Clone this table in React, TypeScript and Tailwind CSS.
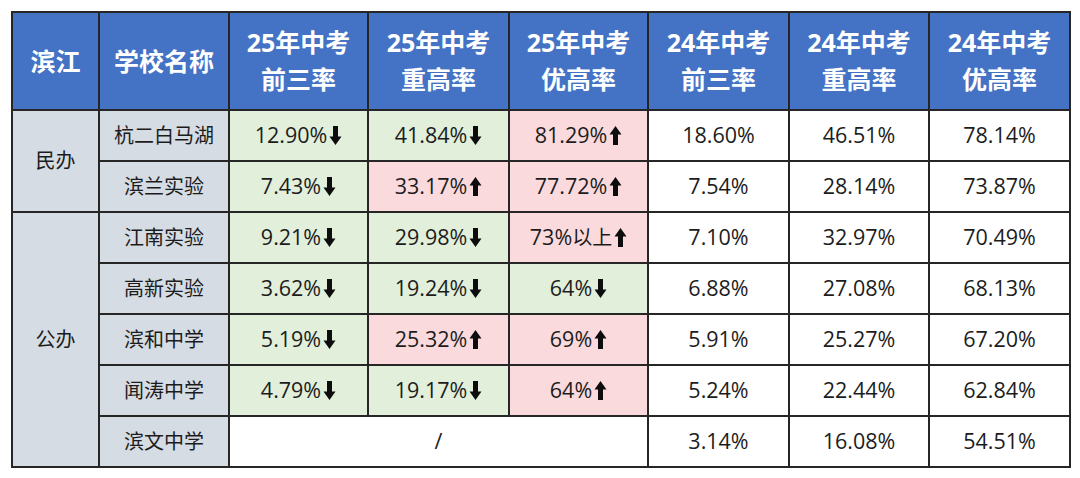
import React from "react";

type Cell = { v: string; t?: "up" | "down" };

const headers = [
  ["滨江"],
  ["学校名称"],
  ["25年中考", "前三率"],
  ["25年中考", "重高率"],
  ["25年中考", "优高率"],
  ["24年中考", "前三率"],
  ["24年中考", "重高率"],
  ["24年中考", "优高率"],
];

const rows: { group?: string; span?: number; name: string; cur: Cell[] | null; prev: string[] }[] = [
  {
    group: "民办",
    span: 2,
    name: "杭二白马湖",
    cur: [
      { v: "12.90%", t: "down" },
      { v: "41.84%", t: "down" },
      { v: "81.29%", t: "up" },
    ],
    prev: ["18.60%", "46.51%", "78.14%"],
  },
  {
    name: "滨兰实验",
    cur: [
      { v: "7.43%", t: "down" },
      { v: "33.17%", t: "up" },
      { v: "77.72%", t: "up" },
    ],
    prev: ["7.54%", "28.14%", "73.87%"],
  },
  {
    group: "公办",
    span: 5,
    name: "江南实验",
    cur: [
      { v: "9.21%", t: "down" },
      { v: "29.98%", t: "down" },
      { v: "73%以上", t: "up" },
    ],
    prev: ["7.10%", "32.97%", "70.49%"],
  },
  {
    name: "高新实验",
    cur: [
      { v: "3.62%", t: "down" },
      { v: "19.24%", t: "down" },
      { v: "64%", t: "down" },
    ],
    prev: ["6.88%", "27.08%", "68.13%"],
  },
  {
    name: "滨和中学",
    cur: [
      { v: "5.19%", t: "down" },
      { v: "25.32%", t: "up" },
      { v: "69%", t: "up" },
    ],
    prev: ["5.91%", "25.27%", "67.20%"],
  },
  {
    name: "闻涛中学",
    cur: [
      { v: "4.79%", t: "down" },
      { v: "19.17%", t: "down" },
      { v: "64%", t: "up" },
    ],
    prev: ["5.24%", "22.44%", "62.84%"],
  },
  {
    name: "滨文中学",
    cur: null,
    prev: ["3.14%", "16.08%", "54.51%"],
  },
];

function Arrow({ dir }: { dir: "up" | "down" }) {
  return (
    <svg
      width="13"
      height="19"
      viewBox="0 0 13 19"
      className={"ml-[2px] " + (dir === "up" ? "rotate-180" : "")}
    >
      <path d="M4 0 H9 V10.5 H12.5 L6.5 19 L0.5 10.5 H4 Z" fill="#0d0d0d" />
    </svg>
  );
}

// digits a bit larger than the CJK text, like the original's font
function Val({ v }: { v: string }) {
  const parts = v.split(/([\u4e00-\u9fff]+)/).filter(Boolean);
  return (
    <>
      {parts.map((p, i) =>
        /[\u4e00-\u9fff]/.test(p) ? (
          <span key={i} className="text-[20px]">
            {p}
          </span>
        ) : (
          <span key={i} className="text-[21.5px]">
            {p}
          </span>
        )
      )}
    </>
  );
}

const cellBase = "border-2 border-[#262626] text-center align-middle";

export default function App() {
  return (
    <div className="w-[1080px] h-[478px] bg-white pt-[11px] pl-[11px] font-['Open_Sans','Noto_Sans_CJK_SC',sans-serif] text-[#1c1c1c]">
      <table className="table-fixed border-collapse w-[1058px]">
        <colgroup>
          <col className="w-[87px]" />
          <col className="w-[130px]" />
          <col className="w-[139px]" />
          <col className="w-[141px]" />
          <col className="w-[139px]" />
          <col className="w-[141px]" />
          <col className="w-[140px]" />
          <col className="w-[141px]" />
        </colgroup>
        <thead>
          <tr className="h-[98px] bg-[#4472C4]">
            {headers.map((h, i) => (
              <th
                key={i}
                className={cellBase + " text-white font-bold text-[25px] leading-[37px]"}
              >
                {h.map((l, j) => (
                  <div key={j}>{l}</div>
                ))}
              </th>
            ))}
          </tr>
        </thead>
        <tbody className="text-[20px]">
          {rows.map((r, i) => (
            <tr key={i} className="h-[51px]">
              {r.group && (
                <td rowSpan={r.span} className={cellBase + " bg-[#D6DCE4]"}>
                  {r.group}
                </td>
              )}
              <td className={cellBase + " bg-[#D6DCE4]"}>{r.name}</td>
              {r.cur ? (
                r.cur.map((c, j) => (
                  <td
                    key={j}
                    className={
                      cellBase + (c.t === "up" ? " bg-[#FADADD]" : " bg-[#E2EFDA]")
                    }
                  >
                    <div className="flex items-center justify-center">
                      <Val v={c.v} />
                      <Arrow dir={c.t!} />
                    </div>
                  </td>
                ))
              ) : (
                <td colSpan={3} className={cellBase + " bg-white"}>
                  <Val v="/" />
                </td>
              )}
              {r.prev.map((p, j) => (
                <td key={j} className={cellBase + " bg-white"}>
                  <Val v={p} />
                </td>
              ))}
            </tr>
          ))}
        </tbody>
      </table>
    </div>
  );
}
